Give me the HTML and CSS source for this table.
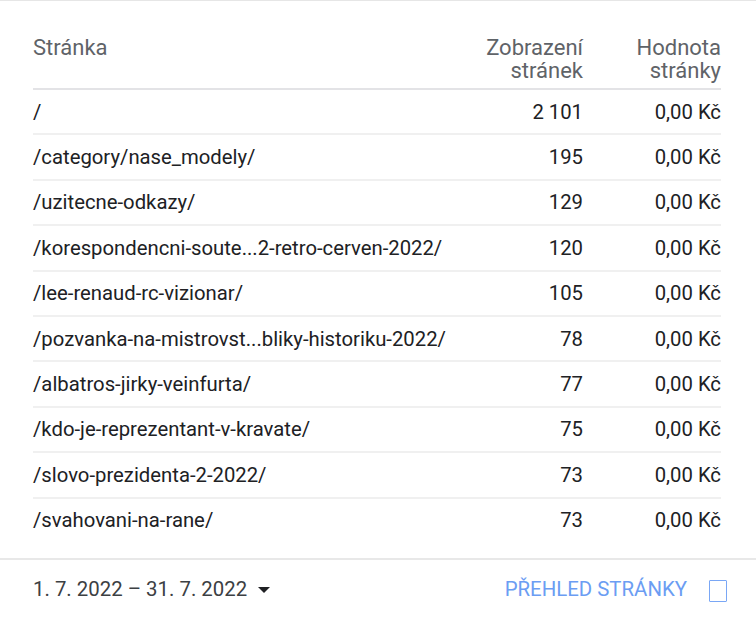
FILE: index.html
```html
<!DOCTYPE html>
<html lang="cs">
<head>
<meta charset="utf-8">
<link rel="stylesheet" href="styles.css">
</head>
<body>
<div class="card">
  <table class="tbl">
    <thead>
      <tr>
        <th class="c-page">Stránka</th>
        <th class="c-num">Zobrazení<br>stránek</th>
        <th class="c-val">Hodnota<br>stránky</th>
      </tr>
    </thead>
    <tbody>
      <tr><td class="c-page">/</td><td class="c-num">2 101</td><td class="c-val">0,00 Kč</td></tr>
      <tr><td class="c-page">/category/nase_modely/</td><td class="c-num">195</td><td class="c-val">0,00 Kč</td></tr>
      <tr><td class="c-page">/uzitecne-odkazy/</td><td class="c-num">129</td><td class="c-val">0,00 Kč</td></tr>
      <tr><td class="c-page">/korespondencni-soute...2-retro-cerven-2022/</td><td class="c-num">120</td><td class="c-val">0,00 Kč</td></tr>
      <tr><td class="c-page">/lee-renaud-rc-vizionar/</td><td class="c-num">105</td><td class="c-val">0,00 Kč</td></tr>
      <tr><td class="c-page">/pozvanka-na-mistrovst...bliky-historiku-2022/</td><td class="c-num">78</td><td class="c-val">0,00 Kč</td></tr>
      <tr><td class="c-page">/albatros-jirky-veinfurta/</td><td class="c-num">77</td><td class="c-val">0,00 Kč</td></tr>
      <tr><td class="c-page">/kdo-je-reprezentant-v-kravate/</td><td class="c-num">75</td><td class="c-val">0,00 Kč</td></tr>
      <tr><td class="c-page">/slovo-prezidenta-2-2022/</td><td class="c-num">73</td><td class="c-val">0,00 Kč</td></tr>
      <tr><td class="c-page">/svahovani-na-rane/</td><td class="c-num">73</td><td class="c-val">0,00 Kč</td></tr>
    </tbody>
  </table>
  <div class="footer">
    <div class="range">
      <span>1. 7. 2022 – 31. 7. 2022</span>
      <span class="caret"></span>
    </div>
    <div class="link">
      <span>PŘEHLED STRÁNKY</span>
      <span class="box"></span>
    </div>
  </div>
</div>
</body>
</html>
```

FILE: styles.css
```css
html, body {
  margin: 0;
  padding: 0;
  background: #ffffff;
}

body {
  font-family: Roboto, "Noto Sans", Arial, sans-serif;
  color: #202124;
}

.card {
  border-top: 1px solid #e6e6e6;
  padding-top: 35px;
}

.tbl {
  border-collapse: collapse;
  margin-left: 33px;
  width: 688px;
  table-layout: fixed;
  font-size: 20.3px;
}

.tbl th {
  font-weight: 400;
  font-size: 22px;
  color: #5f6368;
  line-height: 23px;
  vertical-align: top;
  padding: 0 0 6px 0;
  border-bottom: 2px solid #e3e3e6;
}

.tbl td {
  height: 43.4px;
  padding: 0;
  vertical-align: middle;
  line-height: 24px;
  border-bottom: 2px solid #f0f0f0;
}

.tbl tbody tr:last-child td {
  border-bottom: none;
}

.c-page {
  text-align: left;
  white-space: nowrap;
}

.c-num {
  width: 135px;
  text-align: right;
}

.c-val {
  width: 138px;
  text-align: right;
}

.footer {
  margin-top: 16px;
  border-top: 2px solid #e8e8e8;
  height: 58px;
  display: flex;
  align-items: center;
  justify-content: space-between;
  padding: 0 29px 0 33px;
  font-size: 20.4px;
}

.range {
  display: flex;
  align-items: center;
  gap: 11px;
  color: #3c4043;
}

.caret {
  width: 0;
  height: 0;
  border-left: 6px solid transparent;
  border-right: 6px solid transparent;
  border-top: 6px solid #202124;
  margin-top: 3px;
}

.link {
  display: flex;
  align-items: center;
  gap: 22px;
  color: #6b9df3;
}

.box {
  width: 16px;
  height: 20px;
  border: 1.5px solid #7aa7f5;
  border-radius: 1px;
  margin-top: 4px;
}
```
